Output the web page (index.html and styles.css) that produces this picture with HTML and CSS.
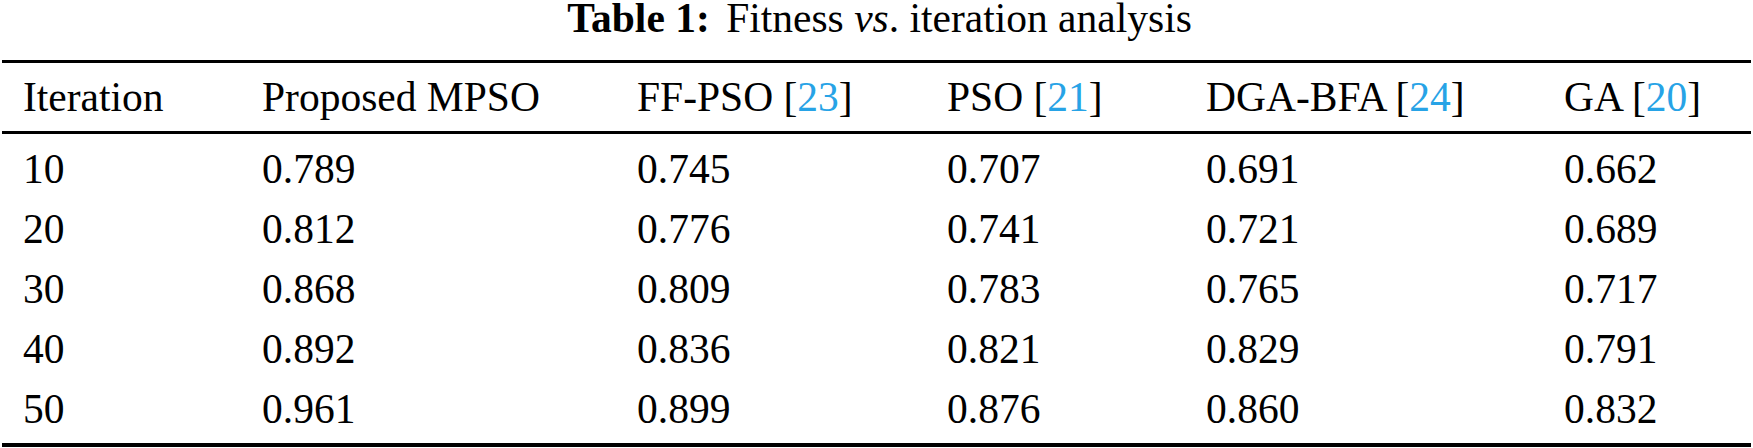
FILE: index.html
```html
<!DOCTYPE html>
<html lang="en">
<head>
<meta charset="utf-8">
<title>Table 1: Fitness vs. iteration analysis</title>
<link rel="stylesheet" href="styles.css">
</head>
<body>
<div class="page">
  <div class="caption"><span class="cap-label">Table 1:</span> Fitness <i>vs</i>. iteration analysis</div>
  <div class="table">
    <div class="thead">
      <div class="row">
        <div class="cell">Iteration</div>
        <div class="cell">Proposed MPSO</div>
        <div class="cell">FF-PSO [<span class="ref">23</span>]</div>
        <div class="cell">PSO [<span class="ref">21</span>]</div>
        <div class="cell">DGA-BFA [<span class="ref">24</span>]</div>
        <div class="cell">GA [<span class="ref">20</span>]</div>
      </div>
    </div>
    <div class="tbody">
      <div class="row">
        <div class="cell">10</div><div class="cell">0.789</div><div class="cell">0.745</div><div class="cell">0.707</div><div class="cell">0.691</div><div class="cell">0.662</div>
      </div>
      <div class="row">
        <div class="cell">20</div><div class="cell">0.812</div><div class="cell">0.776</div><div class="cell">0.741</div><div class="cell">0.721</div><div class="cell">0.689</div>
      </div>
      <div class="row">
        <div class="cell">30</div><div class="cell">0.868</div><div class="cell">0.809</div><div class="cell">0.783</div><div class="cell">0.765</div><div class="cell">0.717</div>
      </div>
      <div class="row">
        <div class="cell">40</div><div class="cell">0.892</div><div class="cell">0.836</div><div class="cell">0.821</div><div class="cell">0.829</div><div class="cell">0.791</div>
      </div>
      <div class="row">
        <div class="cell">50</div><div class="cell">0.961</div><div class="cell">0.899</div><div class="cell">0.876</div><div class="cell">0.860</div><div class="cell">0.832</div>
      </div>
    </div>
  </div>
</div>
</body>
</html>
```
FILE: styles.css
```css
html, body {
  margin: 0;
  padding: 0;
  background: #ffffff;
}

.page {
  width: 1753px;
  font-family: "Liberation Serif", "Times New Roman", serif;
  font-size: 41.5px;
  color: #000000;
}

.caption {
  text-align: center;
  line-height: 36px;
  height: 36px;
  margin-bottom: 24px;
  padding-left: 6px;
}

.cap-label {
  font-weight: bold;
  margin-right: 6px;
}

.table {
  margin: 0 2px;
  width: 1749px;
  border-top: 3px solid #000000;
  border-bottom: 4px solid #000000;
}

.thead {
  border-bottom: 3px solid #000000;
  padding: 3.5px 0 4.5px;
}

.tbody {
  padding: 4.5px 0;
}

.row {
  display: grid;
  grid-template-columns: 239px 375px 310px 259px 358px 208px;
  line-height: 60px;
  height: 60px;
}

.cell {
  padding-left: 21px;
  white-space: nowrap;
}

.ref {
  color: #27a3e6;
}
```
